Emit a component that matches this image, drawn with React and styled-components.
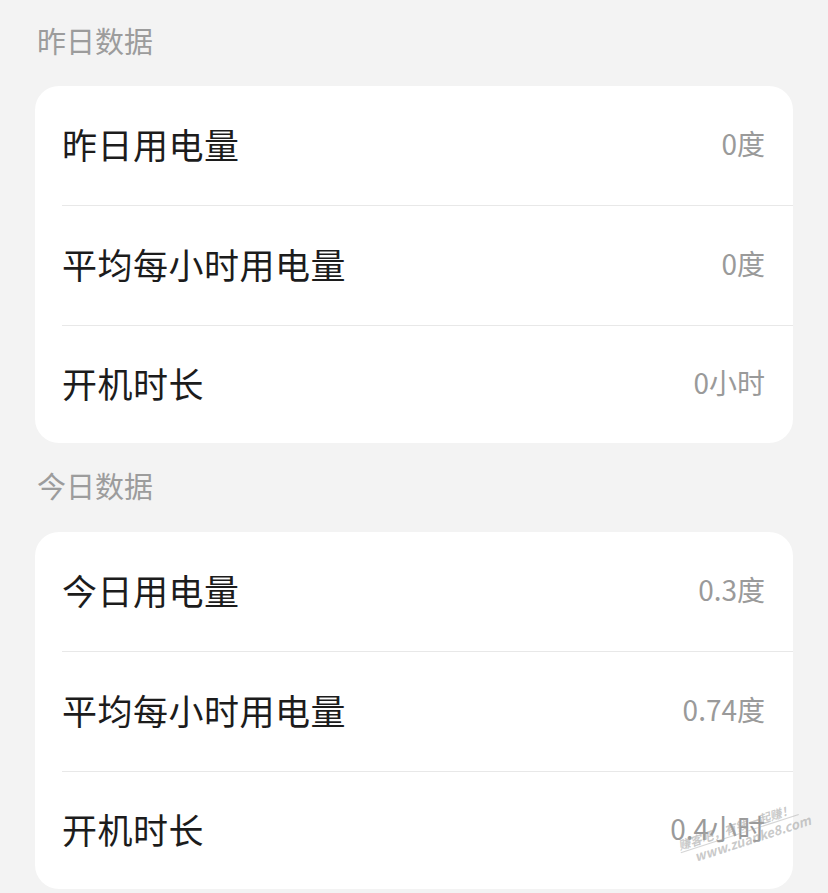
import React from "react";
import styled, { createGlobalStyle } from "styled-components";

const GlobalStyle = createGlobalStyle`
  html, body {
    margin: 0;
    padding: 0;
    background: #f3f3f3;
  }
  body {
    font-family: "Noto Sans CJK SC", "Noto Sans", sans-serif;
  }
`;

const sections = [
  {
    title: "昨日数据",
    rows: [
      { label: "昨日用电量", value: "0度" },
      { label: "平均每小时用电量", value: "0度" },
      { label: "开机时长", value: "0小时" },
    ],
  },
  {
    title: "今日数据",
    rows: [
      { label: "今日用电量", value: "0.3度" },
      { label: "平均每小时用电量", value: "0.74度" },
      { label: "开机时长", value: "0.4小时" },
    ],
  },
];

function App() {
  return (
    <Page>
      <GlobalStyle />
      {sections.map((section, i) => (
        <Section key={section.title}>
          <SectionTitle $first={i === 0}>{section.title}</SectionTitle>
          <Card>
            {section.rows.map((row) => (
              <Row key={row.label}>
                <Label>{row.label}</Label>
                <Value>{row.value}</Value>
              </Row>
            ))}
          </Card>
        </Section>
      ))}
      <Watermark>
        <span>赚客吧，有钱一起赚！</span>
        <span>www.zuanke8.com</span>
      </Watermark>
    </Page>
  );
}

const Page = styled.div`
  position: relative;
  width: 828px;
  height: 893px;
  padding: 0 35px;
  box-sizing: border-box;
  overflow: hidden;
`;

const Section = styled.section`
  display: flex;
  flex-direction: column;
`;

const SectionTitle = styled.div`
  padding: ${(p) => (p.$first ? "20px" : "22px")} 0 ${(p) => (p.$first ? "26px" : "27px")} 2px;
  font-size: 29px;
  line-height: 40px;
  color: #9c9c9c;
`;

const Card = styled.div`
  background: #ffffff;
  border-radius: 24px;
  display: flex;
  flex-direction: column;
`;

const Row = styled.div`
  height: 120px;
  box-sizing: border-box;
  margin-left: 27px;
  padding: 0 28px 5px 0;
  display: flex;
  align-items: center;
  justify-content: space-between;
  border-bottom: 1px solid #e8e8e8;

  &:last-child {
    height: 117px;
    border-bottom: none;
  }
`;

const Label = styled.div`
  font-size: 35px;
  color: #1c1c1c;
  letter-spacing: 0.5px;
`;

const Value = styled.div`
  font-size: 28px;
  color: #9a9a9a;
`;

const Watermark = styled.div`
  position: absolute;
  left: 676px;
  top: 838px;
  display: flex;
  flex-direction: column;
  align-items: flex-start;
  transform: rotate(-18deg);
  transform-origin: left top;
  color: rgba(165, 165, 165, 0.6);
  font-size: 12px;
  font-weight: 700;
  font-style: italic;
  line-height: 15px;
  pointer-events: none;

  span:first-child {
    padding-right: 4px;
    border-bottom: 1px solid rgba(170, 170, 170, 0.5);
  }
  span:last-child {
    padding-left: 12px;
    font-size: 13px;
  }
`;

export default App;
